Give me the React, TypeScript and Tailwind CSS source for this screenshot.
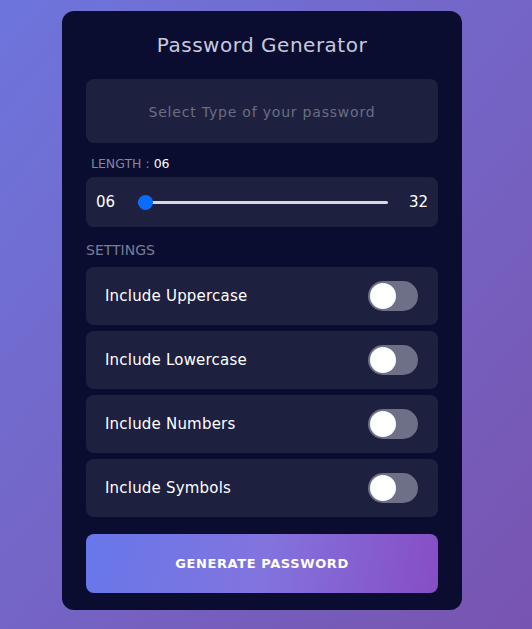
import React from "react";

const rows = ["Include Uppercase", "Include Lowercase", "Include Numbers", "Include Symbols"];

function Toggle() {
  return (
    <div className="relative h-[30px] w-[50px] rounded-full bg-[#6e7088]">
      <div className="absolute left-[2px] top-[2px] h-[26px] w-[26px] rounded-full bg-white" />
    </div>
  );
}

export default function App() {
  return (
    <div
      className="flex min-h-[629px] w-full justify-center bg-gradient-to-br from-[#6d75dc] to-[#7854b0] pr-[8px] pt-[11px]"
      style={{ fontFamily: '"DejaVu Sans", sans-serif' }}
    >
      <div className="flex h-[599px] w-[400px] flex-col rounded-[12px] bg-[#0a0d30] px-6 pt-[22px]">
        <h1 className="text-center text-[20px] leading-[24px] tracking-[0.5px] text-[#c9c9dc]">
          Password Generator
        </h1>
        <div className="mt-[22px] flex h-[64px] items-center justify-center rounded-[8px] bg-[#1e2040] pt-[3px] text-[14px] tracking-[0.8px] text-[#6b6e80]">
          Select Type of your password
        </div>
        <div className="mt-[12px] pl-[5px] pt-[1px] text-[12.5px] leading-[16px] text-[#85879c]">
          LENGTH : <span className="text-white">06</span>
        </div>
        <div className="mt-[5px] flex h-[50px] items-center rounded-[8px] bg-[#1e2040] px-[10px]">
          <span className="w-[42px] text-[15px] text-white">06</span>
          <div className="relative flex h-[15px] flex-1 items-center">
            <div className="h-[3px] w-[250px] rounded-full bg-[#d8d8dc]" />
            <div className="absolute left-0 top-0 h-[15px] w-[15px] rounded-full bg-[#0a6cff]" />
          </div>
          <span className="text-[15px] text-white">32</span>
        </div>
        <div className="mt-[14px] text-[14px] leading-[18px] text-[#7a7d95]">SETTINGS</div>
        <div className="mt-[8px] flex flex-col gap-[6px]">
          {rows.map((r) => (
            <div key={r} className="flex h-[58px] items-center justify-between rounded-[8px] bg-[#1e2040] pl-[19px] pr-[20px]">
              <span className="pt-[1px] text-[15px] tracking-[0.2px] text-white">{r}</span>
              <Toggle />
            </div>
          ))}
        </div>
        <button className="mt-[17px] flex h-[59px] items-center justify-center rounded-[8px] bg-[linear-gradient(100deg,#6777ea_0%,#8274de_50%,#874dc4_100%)] text-[13px] font-semibold tracking-[0.6px] text-white">
          GENERATE PASSWORD
        </button>
      </div>
    </div>
  );
}
